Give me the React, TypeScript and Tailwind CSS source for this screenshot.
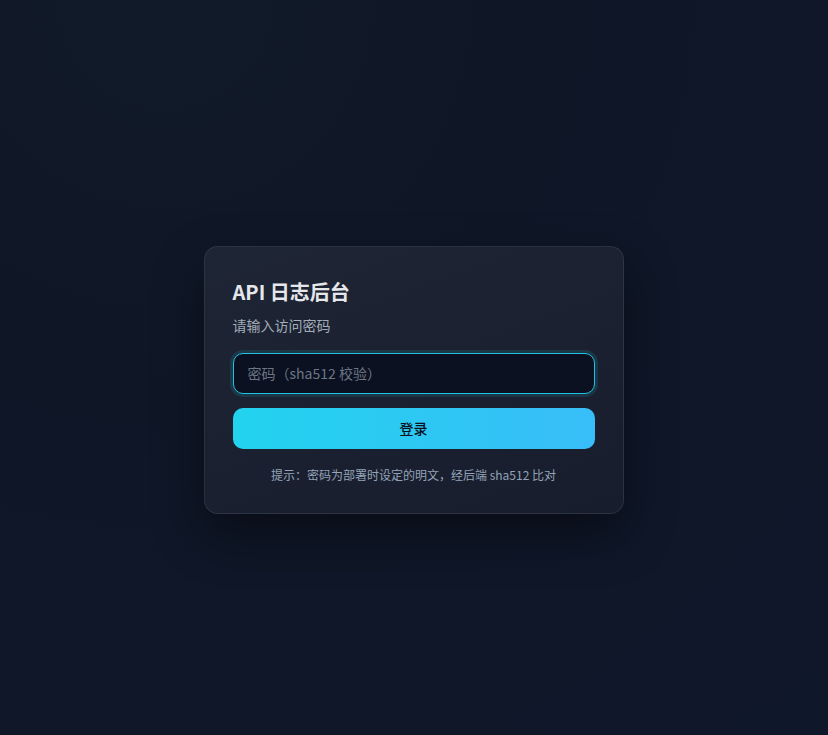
import React from "react";

export default function App() {
  return (
    <div
      className="min-h-[735px] w-full flex items-center justify-center pt-[24px] bg-[radial-gradient(circle_at_20%_0%,#111a29_0%,#0f1727_40%,#0f172a_100%)]"
      style={{ fontFamily: '"Noto Sans CJK SC", "Noto Sans", sans-serif' }}
    >
      <div className="w-[420px] -ml-[1px] rounded-[14px] border border-[rgba(148,163,184,0.14)] bg-[linear-gradient(160deg,#1e2534_0%,#1a2030_60%,#171d2c_100%)] shadow-[0_20px_50px_rgba(0,0,0,0.45)] px-[28px] pt-[31px] pb-[29px]">
        <h1 className="text-[20px] leading-[28px] font-bold text-[#e5e7eb]">API 日志后台</h1>
        <p className="mt-[9px] text-[14px] leading-[20px] text-[#a3acb9]">请输入访问密码</p>
        <input
          type="password"
          placeholder="密码（sha512 校验）"
          className="mt-[18px] block w-full h-[41px] rounded-[10px] bg-[#0b1120] border border-[#22c3e0] shadow-[0_0_0_3px_rgba(34,211,238,0.12)] px-[14px] text-[14px] text-[#e5e7eb] placeholder:text-[#6b7686] outline-none"
        />
        <button className="mt-[14px] block w-full h-[41px] rounded-[10px] bg-[linear-gradient(90deg,#22d3ee_0%,#38bdf8_100%)] text-[14px] font-medium text-[#0b1120]">
          登录
        </button>
        <p className="mt-[17px] text-center text-[12px] leading-[18px] text-[#94a3b8]">
          提示：密码为部署时设定的明文，经后端 sha512 比对
        </p>
      </div>
    </div>
  );
}
